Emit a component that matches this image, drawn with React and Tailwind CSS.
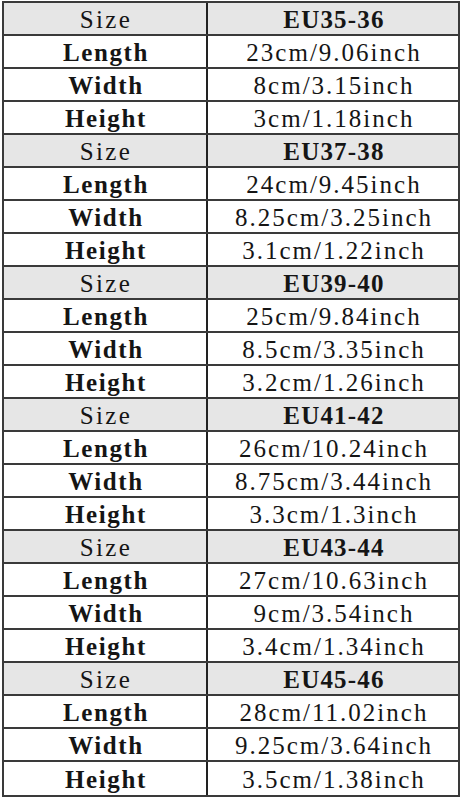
const sizes = [
  { size: 'EU35-36', length: '23cm/9.06inch', width: '8cm/3.15inch', height: '3cm/1.18inch' },
  { size: 'EU37-38', length: '24cm/9.45inch', width: '8.25cm/3.25inch', height: '3.1cm/1.22inch' },
  { size: 'EU39-40', length: '25cm/9.84inch', width: '8.5cm/3.35inch', height: '3.2cm/1.26inch' },
  { size: 'EU41-42', length: '26cm/10.24inch', width: '8.75cm/3.44inch', height: '3.3cm/1.3inch' },
  { size: 'EU43-44', length: '27cm/10.63inch', width: '9cm/3.54inch', height: '3.4cm/1.34inch' },
  { size: 'EU45-46', length: '28cm/11.02inch', width: '9.25cm/3.64inch', height: '3.5cm/1.38inch' },
]

function Row({ label, value, head, boldLabel, last }) {
  return (
    <div
      className={`flex h-[33px] ${last ? '' : 'border-b-2 border-[#3a3a3a]'} ${head ? 'bg-[#e6e6e6]' : 'bg-white'}`}
    >
      <div
        className={`flex w-[204px] items-center justify-center border-r-2 border-[#222] pt-[2px] pl-[2px] ${
          boldLabel ? 'font-bold tracking-[1.6px]' : 'tracking-[2.4px]'
        }`}
      >
        {label}
      </div>
      <div
        className={`flex flex-1 items-center justify-center pt-[2px] pl-[2px] ${
          head ? 'font-bold tracking-[1.2px]' : 'tracking-[2px]'
        }`}
      >
        {value}
      </div>
    </div>
  )
}

export default function App() {
  return (
    <div className="h-[800px] w-[463px] bg-white pt-[1px] pl-[2px]">
      <div
        className="w-[458px] border-2 border-[#3a3a3a] text-[25px] leading-none text-[#151515]"
        style={{ fontFamily: '"Liberation Serif", "DejaVu Serif", serif' }}
      >
        {sizes.map((s, i) => (
          <div key={s.size}>
            <Row label="Size" value={s.size} head />
            <Row label="Length" value={s.length} boldLabel />
            <Row label="Width" value={s.width} boldLabel />
            <Row label="Height" value={s.height} boldLabel last={i === sizes.length - 1} />
          </div>
        ))}
      </div>
    </div>
  )
}
